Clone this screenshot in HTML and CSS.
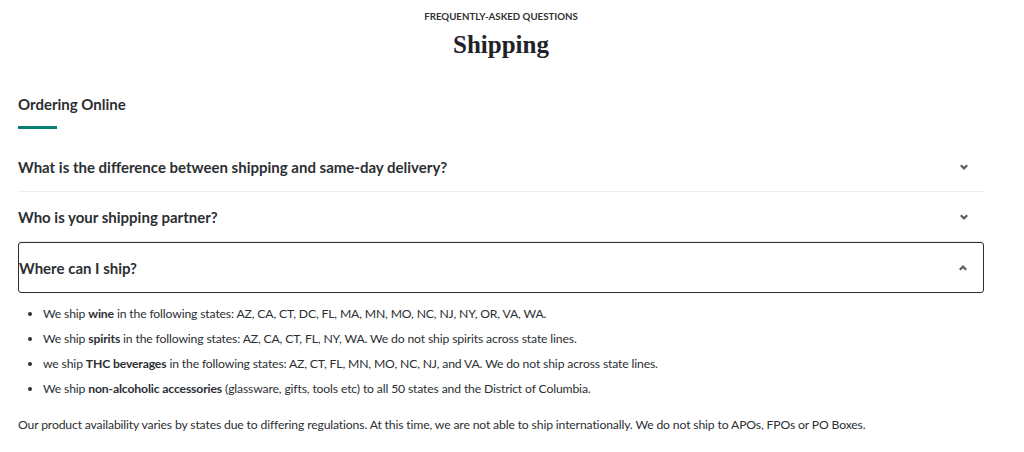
FILE: index.html
```html
<!DOCTYPE html>
<html lang="en">
<head>
    <meta charset="UTF-8">
    <meta name="viewport" content="width=device-width, initial-scale=1.0">
    <title>Shipping FAQ</title>
    <link rel="stylesheet" href="styles.css">
</head>
<body>
    <div class="faq-container">
        <div class="faq-header">
            <p class="eyebrow">Frequently-Asked Questions</p>
            <h1>Shipping</h1>
        </div>

        <div class="faq-tabs">
            <span class="tab active">Ordering Online</span>
        </div>

        <div class="faq-list">
            <div class="faq-item">
                <button class="faq-question">
                    <span>What is the difference between shipping and same-day delivery?</span>
                    <svg class="chevron" viewBox="0 0 10 8" width="10" height="8"><path d="M1.8 2.2 L5 5.4 L8.2 2.2" /></svg>
                </button>
            </div>
            <div class="faq-item">
                <button class="faq-question">
                    <span>Who is your shipping partner?</span>
                    <svg class="chevron" viewBox="0 0 10 8" width="10" height="8"><path d="M1.8 2.2 L5 5.4 L8.2 2.2" /></svg>
                </button>
            </div>
            <div class="faq-item open">
                <button class="faq-question">
                    <span>Where can I ship?</span>
                    <svg class="chevron" viewBox="0 0 10 8" width="10" height="8"><path d="M1.8 5.8 L5 2.6 L8.2 5.8" /></svg>
                </button>
                <div class="faq-answer">
                    <ul>
                        <li>We ship <b>wine</b> in the following states: AZ, CA, CT, DC, FL, MA, MN, MO, NC, NJ, NY, OR, VA, WA.</li>
                        <li>We ship <b>spirits</b> in the following states: AZ, CA, CT, FL, NY, WA. We do not ship spirits across state lines.</li>
                        <li>we ship <b>THC beverages</b> in the following states: AZ, CT, FL, MN, MO, NC, NJ, and VA. We do not ship across state lines.</li>
                        <li>We ship <b>non-alcoholic accessories</b> (glassware, gifts, tools etc) to all 50 states and the District of Columbia.</li>
                    </ul>
                    <p>Our product availability varies by states due to differing regulations. At this time, we are not able to ship internationally. We do not ship to APOs, FPOs or PO Boxes.</p>
                </div>
            </div>
        </div>
    </div>
</body>
</html>
```

FILE: styles.css
```css
body {
    font-family: Lato, "Open Sans", sans-serif;
    margin: 0;
    padding: 0;
    background-color: #fff;
    color: #2b2f33;
}
.faq-container {
    width: 966px;
    margin: 0 0 0 18px;
}
.faq-header {
    text-align: center;
}
.faq-header .eyebrow {
    margin: 0;
    padding-top: 10px;
    font-size: 9.7px;
    line-height: 12px;
    font-weight: 700;
    text-transform: uppercase;
    color: #333;
}
.faq-header h1 {
    margin: 8px 0 0;
    font-family: "Liberation Serif", "DejaVu Serif", serif;
    font-size: 25px;
    line-height: 30px;
    font-weight: 700;
    color: #1f2329;
}
.faq-tabs {
    margin-top: 34px;
}
.faq-tabs .tab {
    display: inline-block;
    font-size: 15px;
    line-height: 18px;
    font-weight: 700;
    color: #2b2f33;
    padding-bottom: 16px;
    position: relative;
}
.faq-tabs .tab.active::after {
    content: "";
    position: absolute;
    left: 0;
    bottom: 0;
    width: 39px;
    height: 3px;
    background-color: #0b7f6f;
}
.faq-list {
    margin-top: 13px;
}
.faq-item {
    border-bottom: 1px solid #eeeeee;
}
.faq-item.open {
    border-bottom: none;
}
.faq-question {
    display: flex;
    align-items: center;
    justify-content: space-between;
    box-sizing: border-box;
    width: 100%;
    height: 49px;
    padding: 0 15px 0 0;
    background: none;
    border: none;
    font-family: inherit;
    font-size: 15px;
    font-weight: 700;
    color: #2b2f33;
    text-align: left;
    cursor: pointer;
}
.faq-item.open .faq-question {
    height: 51px;
    border: 1px solid #2b2f33;
    border-radius: 3px;
    padding-left: 0;
}
.chevron {
    fill: none;
    stroke: #5a5f66;
    stroke-width: 2.2;
}
.faq-answer {
    font-size: 12.2px;
    letter-spacing: -0.15px;
    color: #2b2f33;
}
.faq-answer ul {
    margin: 8px 0 0;
    padding-left: 25px;
}
.faq-answer li {
    line-height: 25px;
}
.faq-answer b {
    font-weight: 700;
}
.faq-answer p {
    margin: 11px 0 0;
    line-height: 25px;
}
```
